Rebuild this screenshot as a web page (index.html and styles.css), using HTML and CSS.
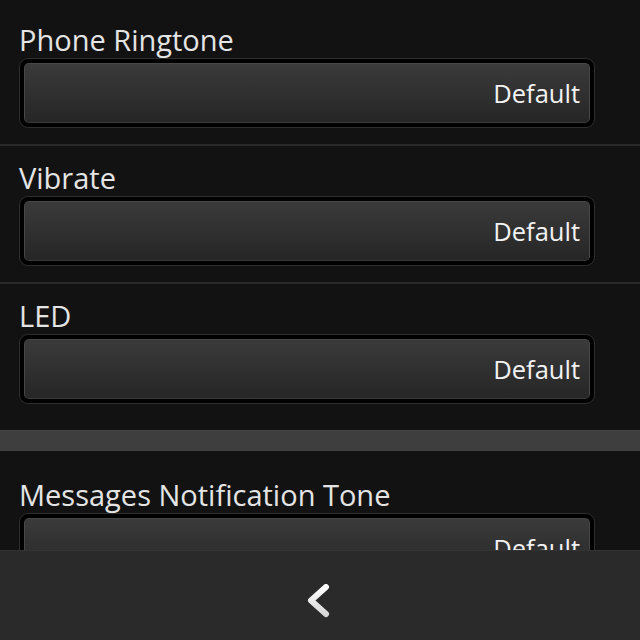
FILE: index.html
```html
<!DOCTYPE html>
<html lang="en">
<head>
<meta charset="utf-8">
<title>Notification settings</title>
<link rel="stylesheet" href="styles.css">
</head>
<body>
<main class="list">
  <section class="setting">
    <div class="label">Phone Ringtone</div>
    <div class="dropdown"><div class="dropdown-face"><span class="value">Default</span></div></div>
  </section>
  <section class="setting">
    <div class="label">Vibrate</div>
    <div class="dropdown"><div class="dropdown-face"><span class="value">Default</span></div></div>
  </section>
  <section class="setting setting-last">
    <div class="label">LED</div>
    <div class="dropdown"><div class="dropdown-face"><span class="value">Default</span></div></div>
  </section>
  <div class="group-divider"></div>
  <section class="setting">
    <div class="label">Messages Notification Tone</div>
    <div class="dropdown"><div class="dropdown-face"><span class="value">Default</span></div></div>
  </section>
</main>
<nav class="action-bar">
  <button class="back" aria-label="Back">
    <svg width="30" height="34" viewBox="0 0 30 34">
      <defs>
        <linearGradient id="chev" x1="0" y1="0" x2="0" y2="1">
          <stop offset="0" stop-color="#ffffff"/>
          <stop offset="1" stop-color="#d8d8d8"/>
        </linearGradient>
      </defs>
      <path d="M21 3 L6 16.5 L21 30" fill="none" stroke="url(#chev)" stroke-width="6" stroke-linecap="round" stroke-linejoin="round"/>
    </svg>
  </button>
</nav>
</body>
</html>
```
FILE: styles.css
```css
html, body {
  margin: 0;
  padding: 0;
  background: #121212;
  height: 100%;
  overflow: hidden;
}
body {
  font-family: "Open Sans", "Noto Sans", sans-serif;
  color: #e6e6e6;
}
.list {
  padding-top: 8px;
}
.setting {
  padding: 13px 45px 16px 19px;
  border-bottom: 2px solid #2a2a2a;
}
.setting-last {
  border-bottom: 2px solid #121212;
}
.label {
  font-size: 29px;
  line-height: 37px;
  height: 37px;
  color: #e4e4e4;
  white-space: nowrap;
}
.dropdown {
  height: 70px;
  box-sizing: border-box;
  border: 1px solid #2e2e2e;
  border-radius: 9px;
  background: #000;
  padding: 4px;
}
.dropdown-face {
  height: 100%;
  box-sizing: border-box;
  border: 1px solid #474747;
  border-bottom-color: #3a3a3a;
  border-radius: 5px;
  background: linear-gradient(#3a3a3a, #262626);
  display: flex;
  align-items: center;
  justify-content: flex-end;
  padding-right: 9px;
}
.value {
  font-size: 25.5px;
  color: #f2f2f2;
}
.group-divider {
  margin-top: 8px;
  height: 21px;
  background: #3e3e3e;
  border-top: 1px solid #454545;
  box-sizing: border-box;
  margin-bottom: 12px;
}
.action-bar {
  position: fixed;
  left: 0;
  right: 0;
  bottom: 0;
  height: 90px;
  background: #2a2a2a;
  border-top: 1px solid #333;
  box-sizing: border-box;
  display: grid;
  grid-template-columns: 1fr 1fr 1fr;
  align-items: center;
}
.back {
  grid-column: 2;
  justify-self: center;
  background: none;
  border: 0;
  padding: 0;
  margin-top: 10px;
  display: flex;
}
```
